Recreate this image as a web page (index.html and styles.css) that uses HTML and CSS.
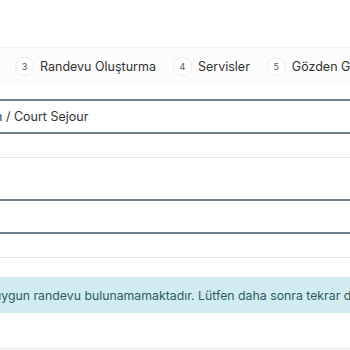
FILE: index.html
```html
<!DOCTYPE html>
<html lang="tr">
<head>
  <meta charset="UTF-8">
  <title>Randevu Oluşturma</title>
  <link rel="stylesheet" href="styles.css">
</head>
<body>
  <div class="top-space"></div>

  <div class="stepper">
    <div class="step">
      <span class="step-number">3</span>
      <span class="step-label">Randevu Oluşturma</span>
    </div>
    <div class="step">
      <span class="step-number">4</span>
      <span class="step-label">Servisler</span>
    </div>
    <div class="step">
      <span class="step-number">5</span>
      <span class="step-label">Gözden G</span>
    </div>
  </div>

  <div class="summary">
    <div class="summary-head">
      <span class="hotel-name">n / Court Sejour</span>
    </div>
    <div class="summary-row"></div>
    <div class="summary-row tall"></div>
  </div>

  <div class="summary">
    <div class="summary-head"></div>
    <div class="summary-row"></div>
  </div>

  <div class="alert-info">
    <span class="alert-text">uygun randevu bulunamamaktadır. Lütfen daha sonra tekrar d</span>
  </div>

  <div class="footer-line"></div>
</body>
</html>
```

FILE: styles.css
```css
body {
  margin: 0;
  font-family: 'Inter', 'Liberation Sans', sans-serif;
  background-color: #fff;
  color: #333;
  overflow: hidden;
}
.top-space {
  height: 47px;
}
.stepper {
  display: flex;
  align-items: center;
  gap: 17px;
  height: 36px;
  padding: 0 0 0 15px;
  border-top: 1px solid #f1f1f1;
  background-color: #fcfcfc;
  white-space: nowrap;
}
.step {
  display: flex;
  align-items: center;
  gap: 6px;
  font-size: 12.5px;
  color: #333;
}
.step-number {
  display: inline-block;
  width: 17px;
  height: 17px;
  border: 1px solid #ececec;
  border-radius: 50%;
  background-color: #fff;
  text-align: center;
  line-height: 17px;
  font-size: 9px;
  color: #555;
}
.summary {
  border-top: 2px solid #6f7c89;
}
.stepper + .summary {
  margin-top: 15px;
}
.summary-head {
  height: 31px;
  display: flex;
  align-items: center;
  border-bottom: 2px solid #6f7c89;
  font-size: 12.5px;
  color: #333;
  white-space: nowrap;
}
.hotel-name {
  margin-left: -5px;
}
.summary-row {
  height: 23px;
  border-bottom: 1px solid #e6e6e6;
}
.summary-row.tall {
  height: 41px;
  border-bottom: none;
}
.alert-info {
  margin-top: 19px;
  height: 36px;
  display: flex;
  align-items: center;
  background-color: #d1ecf1;
  color: #2f5a62;
  font-size: 12.3px;
  white-space: nowrap;
}
.alert-text {
  margin-left: -6px;
}
.footer-line {
  margin-top: 35px;
  border-top: 1px solid #e6e6e6;
}
```
